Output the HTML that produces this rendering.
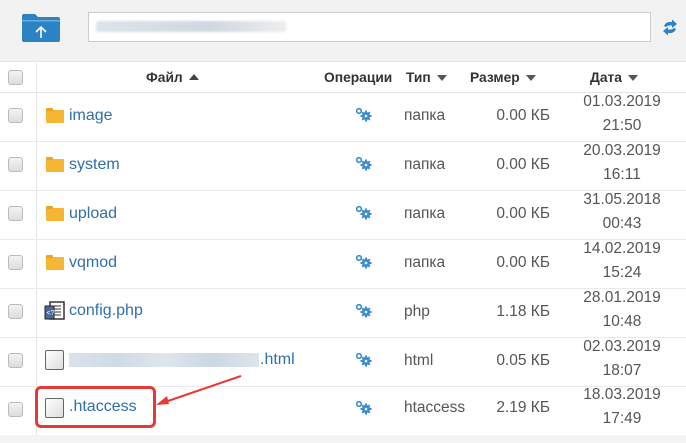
<!DOCTYPE html>
<html><head><meta charset="utf-8"><style>
*{margin:0;padding:0;box-sizing:border-box}
body{width:686px;height:443px;overflow:hidden;background:#fff;font-family:"Liberation Sans",Arial,sans-serif;font-size:16px;color:#555;position:relative}
.top{position:absolute;left:0;top:0;width:686px;height:62px;background:#f2f2f2;border-bottom:1px solid #e4e4e4}
.inpbox{position:absolute;left:88px;top:12px;width:563px;height:30px;background:#fff;border:1px solid #ccc}
.blur{position:absolute;left:96px;top:21px;width:190px;height:11px;background:linear-gradient(90deg,#dde4ec,#cfd7e0 60%,#eee);border-radius:3px;filter:blur(1px)}
.a{position:absolute}
.hdr{position:absolute;top:63px;left:0;width:686px;height:30px;border-bottom:1px solid #e4e4e4;font-weight:bold;color:#333;font-size:13.8px}
.row{position:absolute;left:0;width:686px;height:49px;border-bottom:1px solid #eaeaea}
.vl{position:absolute;left:36px;top:63px;width:1px;height:372px;background:#e4e4e4}
.cb{position:absolute;left:8px;width:15px;height:15px;border:1px solid #bbb;border-radius:3px;background:linear-gradient(#f3f3f3,#ddd)}
.nm{position:absolute;left:69px;color:#2f6faa;font-size:16px}
.ty{position:absolute;left:404px;font-size:15.5px}
.sz{position:absolute;right:136px;text-align:right;font-size:15.5px}
.dt{position:absolute;left:567px;width:110px;text-align:center;line-height:24px;font-size:15.5px}
.tri{display:inline-block;width:0;height:0;border-left:5px solid transparent;border-right:5px solid transparent;margin-left:6px;vertical-align:2px}
.fold{position:absolute;left:46px;width:18px;height:13px;background:#f5b634;border-radius:1px}
.fold:before{content:"";position:absolute;left:0;top:-2px;width:7px;height:3px;background:#e9a520;border-radius:1px 1px 0 0}
.doc{position:absolute;left:45px;width:19px;height:20px;border:1px solid #666;background:linear-gradient(135deg,#fff,#ddd);border-radius:2px}
</style></head><body>
<div class="top"></div>
<svg class="a" style="left:21px;top:13px" width="40" height="30" viewBox="0 0 40 30"><path d="M1 3 Q1 1 3 1 H14 L17 4 H37 Q39 4 39 6 V27 Q39 29 37 29 H3 Q1 29 1 27 Z" fill="#2b82c5"/><rect x="1" y="7" width="38" height="1.5" fill="#6aaee0"/><path d="M20 25 V14 M15 19 L20 14 L25 19" stroke="#fff" stroke-width="1.6" fill="none"/></svg>
<div class="inpbox"></div><div class="blur"></div>
<svg class="a" style="left:662px;top:19px" width="16" height="17" viewBox="0 0 16 17"><path d="M2 7 Q4 2 10 3 V0.5 L15 5 L10 9 V6.5 Q6 6 4 8 Z" fill="#2b82c5"/><path d="M14 10 Q12 15 6 14 V16.5 L1 12 L6 8 V10.5 Q10 11 12 9 Z" fill="#2b82c5"/></svg>
<div class="hdr">
<div class="cb" style="top:7px"></div>
<div class="a" style="left:146px;top:7px">Файл<span class="tri" style="border-bottom:6px solid #444"></span></div>
<div class="a" style="left:324px;top:7px">Операции</div>
<div class="a" style="left:406px;top:7px">Тип<span class="tri" style="border-top:6px solid #555;vertical-align:1px"></span></div>
<div class="a" style="left:470px;top:7px">Размер<span class="tri" style="border-top:6px solid #555;vertical-align:1px"></span></div>
<div class="a" style="left:590px;top:7px">Дата<span class="tri" style="border-top:6px solid #555;vertical-align:1px"></span></div>
</div>
<div class="vl"></div>

<div class="row" style="top:93px"><div class="cb" style="top:15px"></div><div class="fold" style="top:17px"></div><div class="nm" style="top:14px">image</div><div class="ty" style="top:14px">папка</div><div class="sz" style="top:14px">0.00 КБ</div><div class="dt" style="top:-3px">01.03.2019<br>21:50</div></div>
<div class="row" style="top:142px"><div class="cb" style="top:15px"></div><div class="fold" style="top:17px"></div><div class="nm" style="top:14px">system</div><div class="ty" style="top:14px">папка</div><div class="sz" style="top:14px">0.00 КБ</div><div class="dt" style="top:-3px">20.03.2019<br>16:11</div></div>
<div class="row" style="top:191px"><div class="cb" style="top:15px"></div><div class="fold" style="top:17px"></div><div class="nm" style="top:14px">upload</div><div class="ty" style="top:14px">папка</div><div class="sz" style="top:14px">0.00 КБ</div><div class="dt" style="top:-3px">31.05.2018<br>00:43</div></div>
<div class="row" style="top:240px"><div class="cb" style="top:15px"></div><div class="fold" style="top:17px"></div><div class="nm" style="top:14px">vqmod</div><div class="ty" style="top:14px">папка</div><div class="sz" style="top:14px">0.00 КБ</div><div class="dt" style="top:-3px">14.02.2019<br>15:24</div></div>
<div class="row" style="top:289px"><div class="cb" style="top:15px"></div>
<svg class="a" style="left:44px;top:12px" width="22" height="20" viewBox="0 0 22 20"><rect x="6" y="1" width="14" height="17" fill="#fff" stroke="#333" stroke-width="1.5"/><path d="M9 5H17M9 8H17M9 11H17M9 14H17" stroke="#333"/><rect x="1" y="5" width="9" height="13" fill="#4a6a9a" stroke="#222"/><text x="2.5" y="14" font-size="7" fill="#fff" font-family="Liberation Sans">&lt;?</text></svg>
<div class="nm" style="top:13px">config.php</div><div class="ty" style="top:14px">php</div><div class="sz" style="top:14px">1.18 КБ</div><div class="dt" style="top:-3px">28.01.2019<br>10:48</div></div>
<div class="row" style="top:338px"><div class="cb" style="top:15px"></div><div class="doc" style="top:12px"></div><div class="a" style="left:69px;top:15px;width:190px;height:14px;background:linear-gradient(90deg,#d6e0ea,#c9d6e3,#dbe3eb,#c6d3e0,#d9e2ea);opacity:.9"></div><div class="nm" style="left:260px;top:13px">.html</div><div class="ty" style="top:14px">html</div><div class="sz" style="top:14px">0.05 КБ</div><div class="dt" style="top:-3px">02.03.2019<br>18:07</div></div>
<div class="row" style="top:387px"><div class="cb" style="top:15px"></div><div class="doc" style="top:11px"></div><div class="nm" style="top:11px">.htaccess</div><div class="ty" style="top:12px">htaccess</div><div class="sz" style="top:12px">2.19 КБ</div><div class="dt" style="top:-4px">18.03.2019<br>17:49</div></div>
<div class="a" style="left:0;top:435px;width:686px;height:8px;background:#f4f4f4"></div>

<svg width="0" height="0" style="position:absolute"><defs><g id="g"><circle cx="3" cy="3" r="2.3" fill="none" stroke="#3a8ccf" stroke-width="1.6"/><circle cx="10" cy="8" r="4" fill="#3a8ccf"/><path d="M10 2.5V13.5M4.5 8H15.5M6.2 4.2L13.8 11.8M13.8 4.2L6.2 11.8" stroke="#3a8ccf" stroke-width="2"/><circle cx="10" cy="8" r="1.3" fill="#fff"/></g></defs></svg>
<svg class="a" style="left:356px;top:108px" width="17" height="15"><use href="#g"/></svg>
<svg class="a" style="left:356px;top:157px" width="17" height="15"><use href="#g"/></svg>
<svg class="a" style="left:356px;top:206px" width="17" height="15"><use href="#g"/></svg>
<svg class="a" style="left:356px;top:255px" width="17" height="15"><use href="#g"/></svg>
<svg class="a" style="left:356px;top:304px" width="17" height="15"><use href="#g"/></svg>
<svg class="a" style="left:356px;top:353px" width="17" height="15"><use href="#g"/></svg>
<svg class="a" style="left:356px;top:401px" width="17" height="15"><use href="#g"/></svg>

<div class="a" style="left:35px;top:386px;width:121px;height:42px;border:3px solid #e53935;border-radius:6px"></div>
<svg class="a" style="left:150px;top:370px" width="100" height="40"><path d="M91 6 L12 33" stroke="#e53935" stroke-width="2"/><path d="M6 35 L17 26 L19 34 Z" fill="#e53935"/></svg>
</body></html>
